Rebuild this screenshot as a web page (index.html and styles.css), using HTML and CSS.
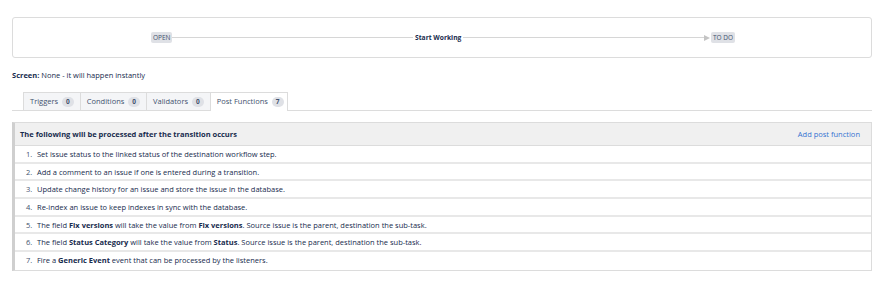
FILE: index.html
```html
<!DOCTYPE html>
<html lang="en">
<head>
    <meta charset="UTF-8">
    <title>Transition: Start Working</title>
    <link rel="stylesheet" href="styles.css">
</head>
<body>
    <div class="page">
        <div class="diagram">
            <span class="status">OPEN</span>
            <div class="line"></div>
            <span class="transition">Start Working</span>
            <div class="line"></div>
            <span class="arrow"></span>
            <span class="status">TO DO</span>
        </div>

        <p class="screen"><b>Screen:</b> None - it will happen instantly</p>

        <ul class="tabs">
            <li class="tab">Triggers <span class="badge">0</span></li>
            <li class="tab">Conditions <span class="badge">0</span></li>
            <li class="tab">Validators <span class="badge">0</span></li>
            <li class="tab active">Post Functions <span class="badge">7</span></li>
        </ul>

        <div class="panel">
            <div class="panel-head">
                <b>The following will be processed after the transition occurs</b>
                <a href="#">Add post function</a>
            </div>
            <ol class="functions">
                <li>Set issue status to the linked status of the destination workflow step.</li>
                <li>Add a comment to an issue if one is entered during a transition.</li>
                <li>Update change history for an issue and store the issue in the database.</li>
                <li>Re-index an issue to keep indexes in sync with the database.</li>
                <li>The field <b>Fix versions</b> will take the value from <b>Fix versions</b>. Source issue is the parent, destination the sub-task.</li>
                <li>The field <b>Status Category</b> will take the value from <b>Status</b>. Source issue is the parent, destination the sub-task.</li>
                <li>Fire a <b>Generic Event</b> event that can be processed by the listeners.</li>
            </ol>
        </div>
    </div>
</body>
</html>
```

FILE: styles.css
```css
*{
    margin: 0;
    padding: 0;
    box-sizing: border-box;
}
body{
    font-family: "Open Sans", "Noto Sans", sans-serif;
    font-size: 7.5px;
    color: #172b4d;
    background: #fff;
}
.page{
    padding: 17px 13px 0 12px;
}
.diagram{
    display: flex;
    align-items: center;
    height: 41px;
    border: 1px solid #dcdcdc;
    border-radius: 3px;
    padding: 0 136px 0 138px;
}
.status{
    background: #dfe1e6;
    color: #42526e;
    font-size: 6.5px;
    padding: 1px 2px;
    border-radius: 2px;
    line-height: 9px;
}
.line{
    flex: 1;
    height: 1px;
    background: #d6d6d6;
}
.transition{
    font-weight: bold;
    font-size: 6.7px;
    padding: 0 2px;
}
.arrow{
    width: 0;
    height: 0;
    border-left: 6px solid #c4c4c4;
    border-top: 3px solid transparent;
    border-bottom: 3px solid transparent;
    margin-right: 1px;
}
.screen{
    margin-top: 12px;
    line-height: 10px;
}
.tabs{
    list-style: none;
    display: flex;
    margin-top: 12px;
    padding-left: 11px;
    border-bottom: 1px solid #dcdcdc;
}
.tab{
    background: #f4f5f7;
    border: 1px solid #dcdcdc;
    border-bottom: none;
    border-right: none;
    height: 18px;
    line-height: 17px;
    padding: 0 6px;
    color: #42526e;
}
.tab.active{
    background: #fff;
    border-right: 1px solid #dcdcdc;
    margin-bottom: -1px;
    height: 19px;
    padding: 0 3px 0 6px;
}
.badge{
    display: inline-block;
    background: #dfe1e6;
    border-radius: 6px;
    font-size: 6.5px;
    font-weight: bold;
    line-height: 10px;
    padding: 0 4px;
    margin-left: 2px;
}
.panel{
    margin-top: 11px;
    border: 1px solid #dcdcdc;
    border-left: 3px solid #cfcfcf;
}
.panel-head{
    display: flex;
    justify-content: space-between;
    align-items: center;
    height: 23px;
    background: #f0f0f0;
    padding: 0 11px 0 5px;
    border-bottom: 1px solid #dcdcdc;
}
.panel-head a{
    color: #3572d0;
    text-decoration: none;
}
.functions{
    list-style: none;
    counter-reset: step;
}
.functions li{
    counter-increment: step;
    height: 17.7px;
    line-height: 16px;
    padding-left: 11px;
    border-bottom: 2px solid #e8e8e8;
}
.functions li::before{
    content: counter(step) ".";
    display: inline-block;
    width: 11px;
    color: #42526e;
}
.functions li:last-child{
    border-bottom: none;
}
```
